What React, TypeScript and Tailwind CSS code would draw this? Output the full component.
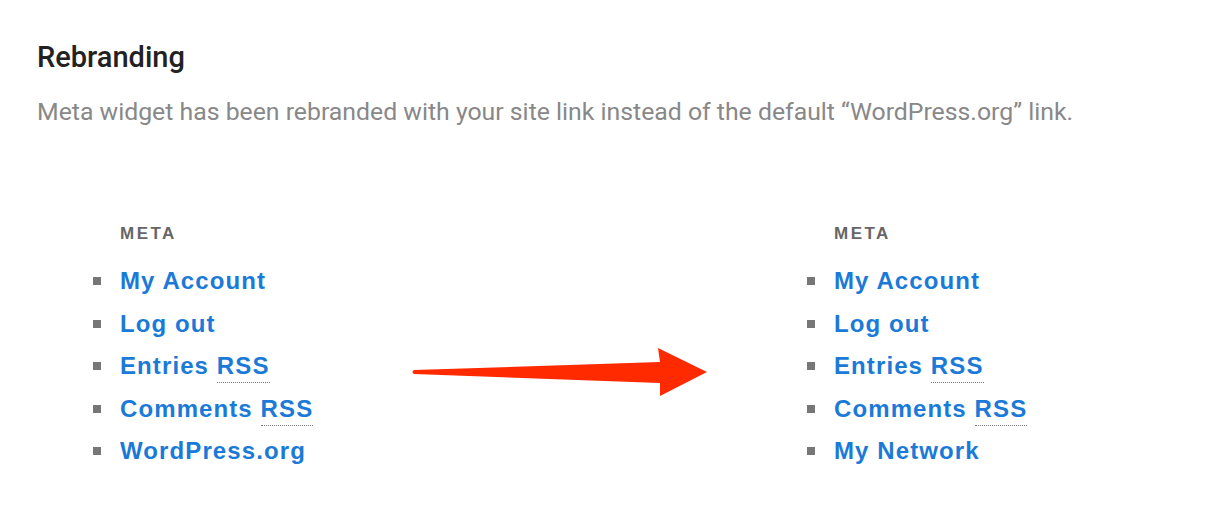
import React from "react";

/* Data */
const BEFORE = ["My Account", "Log out", "Entries RSS", "Comments RSS", "WordPress.org"];
const AFTER = ["My Account", "Log out", "Entries RSS", "Comments RSS", "My Network"];

/* Link text, "RSS" gets the abbr dotted underline */
function LinkText({ text }: { text: string }) {
    if (!text.endsWith(" RSS")) return <>{text}</>;
    return (
        <>
            {text.slice(0, -3)}
            <span className="border-b border-dotted border-[#777] pb-[3px]">RSS</span>
        </>
    );
}

/* Meta widget */
function MetaWidget({ items }: { items: string[] }) {
    return (
        <div className="font-['Liberation_Sans',Arial,sans-serif]">
            <p className="pl-[27px] text-[17px] font-bold tracking-[2.5px] leading-[20px] text-[#666]">
                META
            </p>
            <ul className="mt-[16px]">
                {items.map((item) => (
                    <li key={item} className="flex items-center h-[42.5px]">
                        <span className="w-[8px] h-[8px] bg-[#777] mr-[19px] shrink-0" />
                        <span className="text-[24px] font-bold tracking-[1.1px] text-[#1b7ad8] leading-none">
                            <LinkText text={item} />
                        </span>
                    </li>
                ))}
            </ul>
        </div>
    );
}

/* Red arrow */
function Arrow() {
    return (
        <svg width="300" height="60" viewBox="0 0 300 60" className="shrink-0 mt-[116px]">
            <path
                d="M4,30 L250,22 L248,8 L297,32 L250,56 L250,43 L4,34 Q1,32 4,30 Z"
                fill="#ff2a00"
            />
        </svg>
    );
}

export default function App() {
    return (
        <section className="w-[1220px] h-[511px] bg-white font-['Roboto',sans-serif]">
            <div className="pt-[39px] pl-[37px]">
                <h2 className="text-[29px] font-medium text-[#222] leading-[36px]">Rebranding</h2>
                <p className="mt-[19px] text-[24.8px] text-[#888] leading-[36px]">
                    Meta widget has been rebranded with your site link instead of the default “WordPress.org” link.
                </p>
            </div>

            <div className="flex pl-[93px] pt-[94px]">
                <div className="w-[317px] shrink-0">
                    <MetaWidget items={BEFORE} />
                </div>
                <Arrow />
                <div className="w-[97px] shrink-0" />
                <MetaWidget items={AFTER} />
            </div>
        </section>
    );
}
